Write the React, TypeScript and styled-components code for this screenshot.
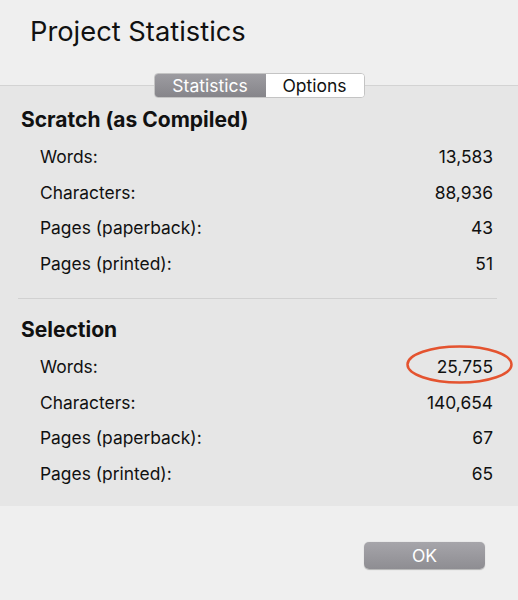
import React from "react";
import styled, { createGlobalStyle } from "styled-components";

const Global = createGlobalStyle`
  html, body { margin: 0; padding: 0; }
  body {
    background: #efefef;
    font-family: Inter, "Liberation Sans", Arial, sans-serif;
    color: #111;
    -webkit-font-smoothing: antialiased;
  }
`;

const Window = styled.div`
  width: 518px;
  height: 600px;
  display: flex;
  flex-direction: column;
  background: #efefef;
  overflow: hidden;
`;

const Header = styled.div`
  height: 73px;
  display: flex;
  flex-direction: column;
  align-items: stretch;
  position: relative;
  z-index: 1;
`;

const Title = styled.h1`
  margin: 0;
  padding: 14px 0 0 30px;
  font-size: 27.3px;
  line-height: 36px;
  font-weight: 400;
  color: #111;
`;

const SegmentBar = styled.div`
  margin-top: auto;
  margin-bottom: -25px;
  display: flex;
  justify-content: center;
`;

const Segments = styled.div`
  display: flex;
  height: 25px;
  border-radius: 4px;
  border: 1px solid #c4c4c4;
  overflow: hidden;
  box-sizing: border-box;
  background: #fff;
`;

const Segment = styled.div<{ $active?: boolean; $w: number }>`
  width: ${(p) => p.$w}px;
  display: flex;
  align-items: center;
  justify-content: center;
  font-size: 17.5px;
  color: ${(p) => (p.$active ? "#fff" : "#111")};
  background: ${(p) =>
    p.$active ? "linear-gradient(#9d9ca1, #86858a)" : "#fff"};
`;

const Panel = styled.div`
  margin-top: 12px;
  border-top: 1px solid #d3d3d3;
  background: #e6e6e6;
  padding: 22px 0 15px;
  position: relative;
`;

const SectionTitle = styled.h2`
  margin: 0 0 7px 21px;
  font-size: 21px;
  line-height: 24px;
  font-weight: 700;
  color: #111;
`;

const Row = styled.div`
  height: 35.5px;
  display: flex;
  align-items: center;
  justify-content: space-between;
  padding: 0 25px 0 40px;
  font-size: 17.4px;
  position: relative;
`;

const Label = styled.span``;
const Value = styled.span``;

const Divider = styled.div`
  height: 1px;
  background: #d1d1d1;
  margin: 17px 21px 19px 18px;
`;

const Circle = styled.svg`
  position: absolute;
  right: 5px;
  top: -4px;
  width: 107px;
  height: 39px;
  pointer-events: none;
`;

const Footer = styled.div`
  flex: 1;
  display: flex;
  justify-content: flex-end;
  align-items: flex-start;
  padding: 36px 33px 0 0;
`;

const OkButton = styled.button`
  width: 121px;
  height: 27px;
  border: none;
  border-radius: 5px;
  background: linear-gradient(#a6a5aa, #8e8d92);
  box-shadow: 0 0.5px 1px rgba(0, 0, 0, 0.25);
  color: #fff;
  font-family: inherit;
  font-size: 17.5px;
  padding: 0;
`;

type Stat = { label: string; value: string; circled?: boolean };

const scratch: Stat[] = [
  { label: "Words:", value: "13,583" },
  { label: "Characters:", value: "88,936" },
  { label: "Pages (paperback):", value: "43" },
  { label: "Pages (printed):", value: "51" },
];

const selection: Stat[] = [
  { label: "Words:", value: "25,755", circled: true },
  { label: "Characters:", value: "140,654" },
  { label: "Pages (paperback):", value: "67" },
  { label: "Pages (printed):", value: "65" },
];

const Rows = ({ items }: { items: Stat[] }) => (
  <>
    {items.map((s) => (
      <Row key={s.label}>
        <Label>{s.label}</Label>
        <Value>{s.value}</Value>
        {s.circled && (
          <Circle viewBox="0 0 107 39">
            <ellipse
              cx="53.5"
              cy="19.5"
              rx="52"
              ry="18"
              fill="none"
              stroke="#e4532f"
              strokeWidth="2.5"
            />
          </Circle>
        )}
      </Row>
    ))}
  </>
);

export default function App() {
  return (
    <>
      <Global />
      <Window>
        <Header>
          <Title>Project Statistics</Title>
          <SegmentBar>
            <Segments>
              <Segment $active $w={111}>Statistics</Segment>
              <Segment $w={98}>Options</Segment>
            </Segments>
          </SegmentBar>
        </Header>
        <Panel>
          <SectionTitle>Scratch (as Compiled)</SectionTitle>
          <Rows items={scratch} />
          <Divider />
          <SectionTitle>Selection</SectionTitle>
          <Rows items={selection} />
        </Panel>
        <Footer>
          <OkButton>OK</OkButton>
        </Footer>
      </Window>
    </>
  );
}
